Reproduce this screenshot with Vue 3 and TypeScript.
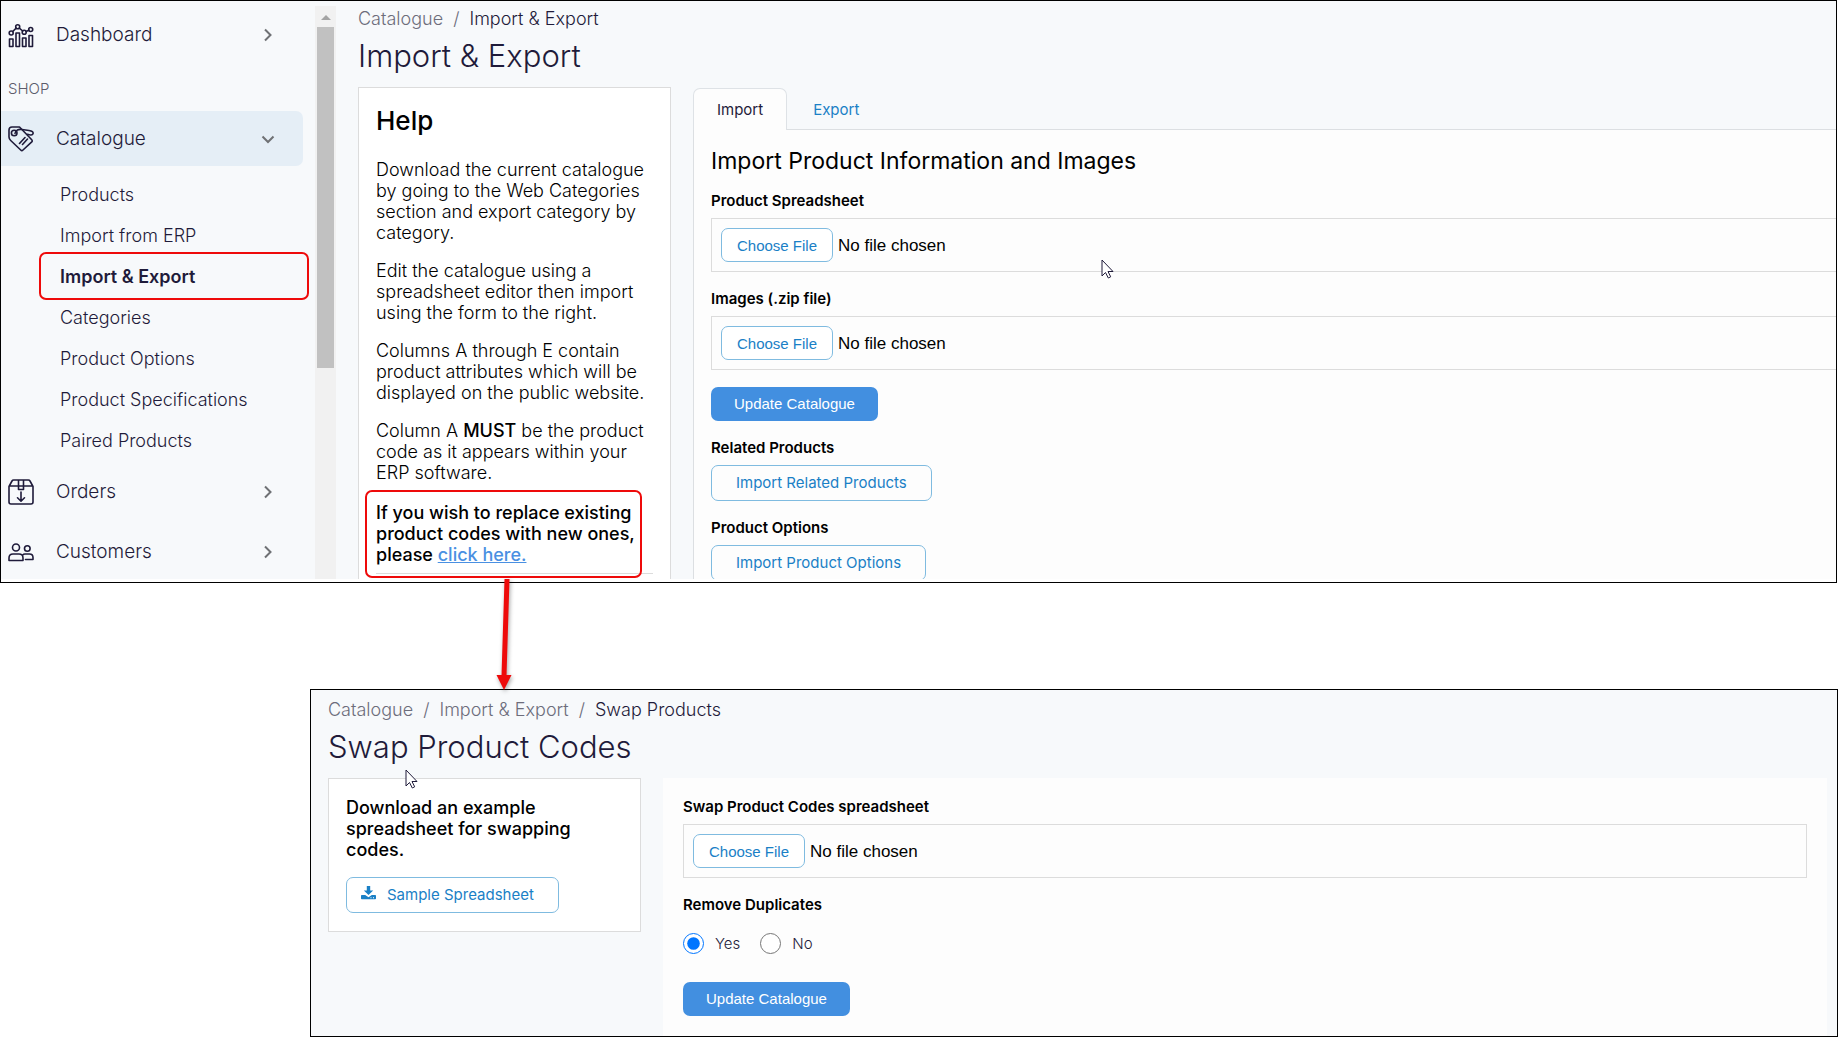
<script setup lang="ts">
import { ref } from 'vue'

interface NavChild {
  label: string
  current?: boolean
}

const catalogueLinks: NavChild[] = [
  { label: 'Products' },
  { label: 'Import from ERP' },
  { label: 'Import & Export', current: true },
  { label: 'Categories' },
  { label: 'Product Options' },
  { label: 'Product Specifications' },
  { label: 'Paired Products' },
]

const removeDuplicates = ref<'yes' | 'no'>('yes')
</script>

<template>
  <div class="page">
    <section class="screen screen-import">
      <nav class="sidebar" aria-label="Main">
        <button type="button" class="nav-item">
          <svg class="nav-icon" viewBox="0 0 26 26" aria-hidden="true">
            <path d="M1.500 17h3.500v7.500h-3.500zM8 11h3.500v13.500h-3.500zM14.500 16h3.500v8.500h-3.500zM21 13.500h3.500v11h-3.500z" />
            <circle cx="3.200" cy="11" r="2" /><circle cx="9.700" cy="4.800" r="2" /><circle cx="16.200" cy="10.200" r="2" /><circle cx="22.700" cy="7.500" r="2" />
            <path d="M4.700 9.500l3.500-3.300M11.300 6.200l3.400 2.800M18 9.500l3-1.300" />
          </svg>
          <span class="nav-label">Dashboard</span>
          <svg class="chevron" viewBox="0 0 14 14" aria-hidden="true"><path d="M4 1.500l5.500 5.500l-5.500 5.500" /></svg>
        </button>

        <div class="nav-heading">SHOP</div>

        <button type="button" class="nav-item active" aria-expanded="true">
          <svg class="nav-icon" viewBox="0 0 26 26" aria-hidden="true">
            <path d="M1 4a3 3 0 0 1 3-3h7.500l12 12.500c1 1 1 1.800 0 2.700l-8.500 7.800c-.8.800-1.500.8-2.300 0l-10-9.500c-1.200-1.100-1.700-2-1.700-3.500z" />
            <circle cx="6.200" cy="7" r="2.800" />
            <path d="M7 7.500c.5-3.500 3.500-4.500 7-4l7 1c3.200.5 4.500 1.700 4 3.200-.5 1.600-2.800 1.700-5.500.6M11.500 17.500l5.500-6M14.500 18.500l5-5.500" />
          </svg>
          <span class="nav-label">Catalogue</span>
          <svg class="chevron" viewBox="0 0 14 14" aria-hidden="true"><path d="M1.500 4.500l5.500 5.500l5.500-5.500" /></svg>
        </button>
        <ul class="subnav">
          <li v-for="link in catalogueLinks" :key="link.label" :class="{ current: link.current }">
            <a href="#" :aria-current="link.current ? 'page' : undefined">{{ link.label }}</a>
          </li>
        </ul>

        <button type="button" class="nav-item">
          <svg class="nav-icon" viewBox="0 0 26 26" aria-hidden="true">
            <path d="M1 7.500l3-5.500c.4-.7.8-1 1.600-1h14.800c.8 0 1.200.3 1.600 1l3 5.500v15.500a2 2 0 0 1-2 2h-20a2 2 0 0 1-2-2zM1.200 7h23.600M10.500 1v9.500h5v-9.500M13 13v9M9.500 18.800l3.500 3.400l3.500-3.400" />
          </svg>
          <span class="nav-label">Orders</span>
          <svg class="chevron" viewBox="0 0 14 14" aria-hidden="true"><path d="M4 1.500l5.500 5.500l-5.500 5.500" /></svg>
        </button>
        <button type="button" class="nav-item">
          <svg class="nav-icon" viewBox="0 0 26 26" aria-hidden="true">
            <circle cx="8" cy="8.500" r="3.500" /><circle cx="19.300" cy="9.500" r="2.800" />
            <path d="M1 21.500v-2.500c0-2.500 1.700-4 4-4h6c2.400 0 4 1.500 4 4v2.500zM14.500 16.200c.7-.8 1.600-1.200 2.500-1.200h4.500c2.200 0 3.500 1.300 3.500 3.500v2h-7.500" />
          </svg>
          <span class="nav-label">Customers</span>
          <svg class="chevron" viewBox="0 0 14 14" aria-hidden="true"><path d="M4 1.500l5.500 5.500l-5.500 5.500" /></svg>
        </button>
      </nav>

      <div class="scrollbar" aria-hidden="true">
        <span class="scroll-arrow"></span>
        <span class="scroll-thumb"></span>
      </div>

      <main class="content">
        <nav class="crumbs" aria-label="Breadcrumb">
          <a href="#">Catalogue</a><span class="sep">/</span><span class="here">Import &amp; Export</span>
        </nav>
        <h1>Import &amp; Export</h1>
        <div class="columns">
          <aside class="card help">
            <h2>Help</h2>
            <p>Download the current catalogue by going to the Web Categories section and export category by category.</p>
            <p>Edit the catalogue using a spreadsheet editor then import using the form to the right.</p>
            <p>Columns A through E contain product attributes which will be displayed on the public website.</p>
            <p>Column A <strong>MUST</strong> be the product code as it appears within your ERP software.</p>
            <p class="swap-note">If you wish to replace existing product codes with new ones, please <a href="#">click here.</a></p>
            <hr />
          </aside>
          <div class="tabbed">
            <div class="tabs" role="tablist">
              <button type="button" class="tab selected" role="tab" aria-selected="true">Import</button>
              <button type="button" class="tab" role="tab" aria-selected="false">Export</button>
            </div>
            <form class="import-form" @submit.prevent>
              <h3>Import Product Information and Images</h3>
              <div class="field">
                <label for="product-file">Product Spreadsheet</label>
                <input id="product-file" type="file" />
              </div>
              <div class="field">
                <label for="images-file">Images (.zip file)</label>
                <input id="images-file" type="file" />
              </div>
              <button type="submit" class="primary">Update Catalogue</button>
              <div class="field">
                <span class="field-title">Related Products</span>
                <button type="button" class="outline">Import Related Products</button>
              </div>
              <div class="field">
                <span class="field-title">Product Options</span>
                <button type="button" class="outline">Import Product Options</button>
              </div>
            </form>
          </div>
        </div>
      </main>

      <svg class="pointer pointer-form" viewBox="0 0 13 20" aria-hidden="true"><path d="M1 1v16l3.500-3.500l2.800 5.500l2.400-1.200l-2.700-5.300h5z" /></svg>
    </section>

    <div class="connector" aria-hidden="true">
      <svg viewBox="0 0 24 112">
        <path d="M11.500 0h5l-3 97h-5z" /><path d="M3.500 96h15l-7.500 15z" />
      </svg>
    </div>

    <section class="screen screen-swap">
      <nav class="crumbs" aria-label="Breadcrumb">
        <a href="#">Catalogue</a><span class="sep">/</span><a href="#">Import &amp; Export</a><span class="sep">/</span><span class="here">Swap Products</span>
      </nav>
      <h1>Swap Product Codes</h1>
      <div class="columns">
        <aside class="card sample">
          <p><strong>Download an example spreadsheet for swapping codes.</strong></p>
          <button type="button" class="outline with-icon">
            <svg viewBox="0 0 15 14" aria-hidden="true">
              <path d="M5.800 0h3.400v4.500h3l-4.700 4.500l-4.700-4.500h3z" />
              <path fill-rule="evenodd" d="M.8 9h3.400l3.300 2.200l3.300-2.200h3.400c.5 0 .8.300.8.800v2.700c0 .5-.3.800-.8.800h-13.400c-.5 0-.8-.3-.8-.8v-2.700c0-.5.300-.8.800-.8zM9.500 11.300v1h1v-1zM12 11.300v1h1v-1z" />
            </svg>
            Sample Spreadsheet
          </button>
        </aside>
        <form class="swap-form" @submit.prevent>
          <div class="field">
            <label for="swap-file">Swap Product Codes spreadsheet</label>
            <input id="swap-file" type="file" />
          </div>
          <fieldset>
            <legend>Remove Duplicates</legend>
            <div class="choices">
              <label><input v-model="removeDuplicates" type="radio" name="remove" value="yes" />Yes</label>
              <label><input v-model="removeDuplicates" type="radio" name="remove" value="no" />No</label>
            </div>
          </fieldset>
          <button type="submit" class="primary">Update Catalogue</button>
        </form>
      </div>
      <svg class="pointer pointer-title" viewBox="0 0 13 20" aria-hidden="true"><path d="M1 1v16l3.500-3.500l2.800 5.500l2.400-1.200l-2.700-5.300h5z" /></svg>
    </section>
  </div>
</template>

<style>
body {
  margin: 0;
  background: #fff;
}
</style>

<style scoped>
.page {
  font-family: Inter, sans-serif;
  font-size: 18px;
  font-weight: 300;
  line-height: 21px;
  color: #000;
}
.page *,
.page *::before {
  box-sizing: border-box;
}
button {
  font-family: inherit;
  cursor: pointer;
}
.screen {
  position: relative;
  border: 1px solid #000;
  background: #f7f9fb;
}

/* Sidebar */
.screen-import {
  display: flex;
  margin-right: 1px;
  padding-bottom: 3px;
  box-shadow: inset 0 -3px #fff;
}
.sidebar {
  flex: 0 0 314px;
  padding-top: 6px;
}
.nav-item {
  display: flex;
  align-items: center;
  width: 302px;
  height: 55px;
  margin: 0;
  padding: 0 28px 0 7px;
  border: 0;
  border-radius: 0 7px 7px 0;
  background: none;
  color: #1f1b3a;
  font-size: 19px;
  font-weight: 300;
  text-align: left;
}
.nav-item + .nav-item {
  margin-top: 5px;
}
.nav-item.active {
  background: #e5eef6;
}
.nav-icon {
  width: 26px;
  height: 26px;
  fill: none;
  stroke: #1f1b3a;
  stroke-width: 1.6;
  stroke-linejoin: round;
  stroke-linecap: round;
}
.nav-label {
  flex: 1;
  margin-left: 22px;
}
.chevron {
  width: 14px;
  height: 14px;
  fill: none;
  stroke: #6f7174;
  stroke-width: 2;
}
.nav-heading {
  margin: 17px 0 12px 7px;
  font-size: 15px;
  line-height: 20px;
  color: #5c5c6b;
}
.subnav {
  margin: 0;
  padding: 8px 0 3px;
  list-style: none;
}
.subnav li {
  position: relative;
  padding-left: 59px;
  line-height: 41px;
}
.subnav a {
  color: #1f1b3a;
  text-decoration: none;
}
.subnav .current {
  font-weight: 600;
}
.subnav .current::before {
  content: '';
  position: absolute;
  inset: -4px 6px -3px 38px;
  border: 2px solid #ee0a0a;
  border-radius: 7px;
  pointer-events: none;
}
.scrollbar {
  display: flex;
  flex-direction: column;
  align-items: center;
  flex: 0 0 21px;
  margin-top: 5px;
  padding-top: 9px;
  background: #f1f1f1;
}
.scroll-arrow {
  border: 5px solid transparent;
  border-top-width: 0;
  border-bottom: 5px solid #a3a3a3;
}
.scroll-thumb {
  width: 17px;
  height: 341px;
  margin-top: 7px;
  background: #c1c1c1;
}

/* Page heading */
.content {
  flex: 1;
  min-width: 0;
  padding: 6px 0 0 22px;
  overflow: hidden;
}
.crumbs {
  line-height: 24px;
  color: #6d6d7b;
}
.crumbs a {
  color: inherit;
  text-decoration: none;
}
.crumbs .sep {
  margin: 0 10px;
}
.crumbs .here {
  color: #1f1b3a;
}
h1 {
  margin: 7px 0 13px;
  font-size: 31px;
  font-weight: 300;
  line-height: 36px;
  color: #1f1b3a;
}
.columns {
  display: flex;
  gap: 22px;
}

/* Cards */
.card {
  flex: 0 0 313px;
  padding: 18px 17px;
  border: 1px solid #dcdcdc;
  background: #fff;
}
.card p {
  margin: 0 0 17px;
}
strong {
  font-weight: 500;
}
.help {
  padding-bottom: 0;
  border-bottom: 0;
}
.help h2 {
  margin: 0 0 23px;
  font-size: 26px;
  font-weight: 500;
  line-height: 30px;
}
.card .swap-note {
  position: relative;
  margin: 19px 0 8px;
  font-weight: 500;
}
.swap-note::before {
  content: '';
  position: absolute;
  inset: -12px auto -13px -11px;
  width: 277px;
  border: 2px solid #ee0a0a;
  border-radius: 7px;
  pointer-events: none;
}
.swap-note a {
  position: relative;
  color: #4a90e2;
}
hr {
  margin: 0;
  border: 0;
  border-top: 1px solid #dcdcdc;
}
.sample {
  align-self: flex-start;
}

/* Tabs and forms */
.tabbed {
  flex: 1;
  min-width: 0;
  padding-top: 1px;
}
.tabs {
  display: flex;
  gap: 2px;
  height: 41px;
}
.tab {
  height: 42px;
  margin-bottom: -1px;
  padding: 0 23px;
  border: 1px solid transparent;
  border-bottom: 0;
  border-radius: 7px 7px 0 0;
  background: none;
  color: #1a80c6;
  font-size: 15px;
  font-weight: 400;
}
.tab.selected {
  position: relative;
  border-color: #dee2e6;
  background: #fdfdfd;
  color: #1f1b3a;
}
.import-form {
  margin-bottom: -2px;
  padding: 17px 0 0 17px;
  border-top: 1px solid #dcdfe2;
  border-left: 1px solid #dcdfe2;
  background: #fdfdfd;
}
h3 {
  margin: 0 0 16px;
  font-size: 23px;
  font-weight: 400;
  line-height: 28px;
}
.field > label,
.field-title,
legend {
  display: block;
  margin-bottom: 7px;
  padding: 0;
  font-size: 15px;
  font-weight: 600;
  line-height: 20px;
}
.field:not(:last-child),
.import-form .primary {
  margin-bottom: 17px;
}
input[type='file'] {
  display: block;
  width: 100%;
  height: 54px;
  padding: 9px;
  border: 1px solid #dcdcdc;
  font: 400 17px/34px 'Liberation Sans', Arial, sans-serif;
  color: #000;
}
.import-form input[type='file'] {
  border-right: 0;
}
input[type='file']::file-selector-button {
  box-sizing: border-box;
  height: 34px;
  margin: 0 5px 0 0;
  padding: 0 15px;
  border: 1px solid #7fbbe0;
  border-radius: 7px;
  background: #fff;
  color: #1a80c6;
  font: 400 15px 'Liberation Sans', Arial, sans-serif;
}
.primary {
  display: block;
  height: 34px;
  padding: 0 23px 2px;
  border: 0;
  border-radius: 7px;
  background: #428fe0;
  color: #fff;
  font: 400 15px 'Liberation Sans', Arial, sans-serif;
}
.outline {
  display: block;
  height: 36px;
  padding: 0 24px 1px;
  border: 1px solid #7fbbe0;
  border-radius: 7px;
  background: transparent;
  color: #1a80c6;
  font-size: 15px;
  font-weight: 400;
}
.outline.with-icon {
  display: flex;
  align-items: center;
  gap: 11px;
  padding-left: 14px;
}
.with-icon svg {
  width: 15px;
  height: 14px;
  margin-top: -3px;
  fill: #1a80c6;
}

/* Swap products screen */
.screen-swap {
  margin-left: 310px;
  padding: 8px 10px 0 17px;
}
.swap-form {
  flex: 1;
  min-width: 0;
  padding: 19px 20px 20px;
  background: #fdfdfd;
}
fieldset {
  margin: 0 0 28px;
  padding: 0;
  border: 0;
}
legend {
  margin-bottom: 17px;
}
.choices {
  display: flex;
  gap: 20px;
}
.choices label {
  display: flex;
  align-items: center;
  gap: 11px;
  height: 22px;
  font-size: 15px;
  color: #1f1b3a;
}
.choices input {
  width: 21px;
  height: 21px;
  margin: 0;
}

/* Annotations */
.connector {
  position: relative;
  height: 106px;
}
.connector svg {
  position: absolute;
  z-index: 1;
  top: -4px;
  left: 493px;
  width: 24px;
  height: 112px;
  fill: #ee0a0a;
  filter: drop-shadow(1px 2px 2px rgba(0, 0, 0, 0.35));
}
.pointer {
  position: absolute;
  width: 13px;
  height: 20px;
  fill: #fff;
  stroke: #1f1b3a;
}
.pointer-form {
  left: 1100px;
  top: 258px;
}
.pointer-title {
  left: 94px;
  top: 79px;
}
</style>
